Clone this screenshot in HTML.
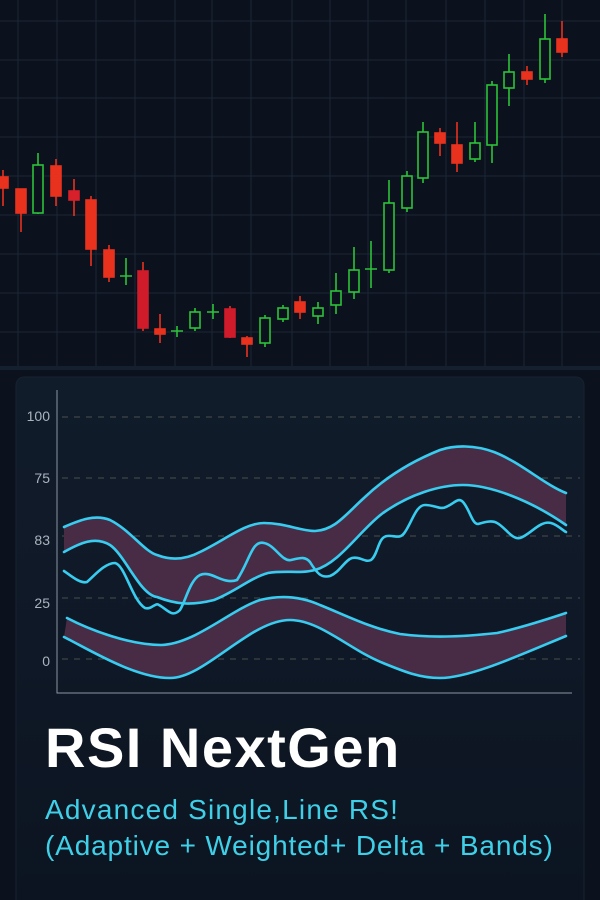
<!DOCTYPE html>
<html><head><meta charset="utf-8"><style>
html,body{margin:0;padding:0;background:#0b111d;width:600px;height:900px;overflow:hidden}
svg{position:absolute;left:0;top:0}
.t{position:absolute;left:45px;font-family:"Liberation Sans",sans-serif}
</style></head><body>
<svg width="600" height="900" viewBox="0 0 600 900">
<defs>
<linearGradient id="cg" x1="0" y1="0" x2="0" y2="1"><stop offset="0" stop-color="#111c2b"/><stop offset="1" stop-color="#0c1421"/></linearGradient>
</defs>
<rect width="600" height="370" fill="#0b111d"/>
<g stroke="#1c2638" stroke-width="1">
<path d="M0 21H600M0 60H600M0 98H600M0 137H600M0 176H600M0 215H600M0 254H600M0 293H600M0 332H600"/>
<path d="M18 0V368M57 0V368M96 0V368M135 0V368M175 0V368M212 0V368M251 0V368M292 0V368M330 0V368M368 0V368M406 0V368M446 0V368M485 0V368M524 0V368M562 0V368"/>
</g>
<rect x="0" y="366" width="600" height="4" fill="#15202f"/>
<g stroke-width="1.6">
<g stroke="#e8321e" fill="#e8321e">
<path d="M3 170V206"/><rect x="-2" y="177" width="10" height="11"/>
<path d="M21 189V232"/><rect x="16" y="189" width="10" height="24"/>
<path d="M56 159V206"/><rect x="51" y="166" width="10" height="30"/>
<path d="M74 179V216"/><rect x="69" y="191" width="10" height="9" fill="#d8202a" stroke="#d8202a"/>
<path d="M91 196V266"/><rect x="86" y="200" width="10" height="49"/>
<path d="M109 245V282"/><rect x="104" y="250" width="10" height="27"/>
<path d="M143 262V331"/><rect x="138" y="271" width="10" height="57" fill="#d01c2a" stroke="#d01c2a"/>
<path d="M160 314V343"/><rect x="155" y="329" width="10" height="5"/>
<path d="M230 306V338"/><rect x="225" y="309" width="10" height="28" fill="#d01c2a" stroke="#d01c2a"/>
<path d="M247 336V357"/><rect x="242" y="338" width="10" height="6"/>
<path d="M300 296V319"/><rect x="295" y="302" width="10" height="10"/>
<path d="M440 128V156"/><rect x="435" y="133" width="10" height="10"/>
<path d="M457 122V172"/><rect x="452" y="145" width="10" height="18"/>
<path d="M527 66V85"/><rect x="522" y="72" width="10" height="7"/>
<path d="M562 21V57"/><rect x="557" y="39" width="10" height="13"/>
</g>
<g stroke="#2cc23a" fill="none">
<path d="M38 153V214"/><rect x="33" y="165" width="10" height="48" fill="#0b111d"/>
<path d="M126 258V285M120 276H132"/>
<path d="M177 326V337M171 331H183"/>
<path d="M195 308V331"/><rect x="190" y="312" width="10" height="16" fill="#0b111d"/>
<path d="M213 304V319M207 312H219"/>
<path d="M265 315V347"/><rect x="260" y="318" width="10" height="25" fill="#0b111d"/>
<path d="M283 305V322"/><rect x="278" y="308" width="10" height="11" fill="#0b111d"/>
<path d="M318 302V324"/><rect x="313" y="308" width="10" height="8" fill="#0b111d"/>
<path d="M336 273V314"/><rect x="331" y="291" width="10" height="14" fill="#0b111d"/>
<path d="M354 247V299"/><rect x="349" y="270" width="10" height="22" fill="#0b111d"/>
<path d="M371 241V288M365 269H377"/>
<path d="M389 180V273"/><rect x="384" y="203" width="10" height="67" fill="#0b111d"/>
<path d="M407 171V212"/><rect x="402" y="176" width="10" height="32" fill="#0b111d"/>
<path d="M423 122V183"/><rect x="418" y="132" width="10" height="46" fill="#0b111d"/>
<path d="M475 122V162"/><rect x="470" y="143" width="10" height="16" fill="#0b111d"/>
<path d="M492 81V163"/><rect x="487" y="85" width="10" height="60" fill="#0b111d"/>
<path d="M509 54V106"/><rect x="504" y="72" width="10" height="16" fill="#0b111d"/>
<path d="M545 14V83"/><rect x="540" y="39" width="10" height="40" fill="#0b111d"/>
</g>
</g>
<rect x="16" y="377" width="568" height="540" rx="8" fill="url(#cg)" stroke="#17222f"/>
<g stroke="#4a4f4f" stroke-width="1" stroke-dasharray="6 6">
<path d="M62 417H580M62 478H580M62 536H580M62 598H580M62 659H580"/>
</g>
<path d="M57 390V693H572" stroke="#8a96a3" stroke-width="1" fill="none"/>
<g font-family="Liberation Sans,sans-serif" font-size="14" fill="#aab4bf" text-anchor="end">
<text x="50" y="421">100</text><text x="50" y="483">75</text><text x="50" y="545">83</text><text x="50" y="608">25</text><text x="50" y="666">0</text>
</g>
<g fill="#482c45">
<path d="M64 527C80 520 95 514 110 520C130 530 145 552 157 555C170 560 185 560 200 552C225 540 245 523 264 523C285 523 300 531 315 531C335 530 345 515 365 497C385 478 410 462 440 450C455 445 475 445 494 452C520 462 545 485 566 493L566 525C530 500 490 485 463 485C440 485 410 494 383 513C360 530 340 563 315 570C300 574 285 570 268 573C250 578 235 592 214 600C190 606 175 604 157 597C140 595 125 555 110 545C95 536 80 543 64 552Z"/>
<path d="M67 618C90 630 130 645 161 645C195 644 230 610 260 600C280 595 300 596 320 605C345 615 370 628 400 634C430 638 460 637 497 633C520 628 545 620 566 613L566 636C520 655 470 678 440 678C420 678 405 672 383 663C350 650 320 620 290 620C250 620 205 678 170 678C135 678 90 650 64 637Z"/>
</g>
<g fill="none" stroke="#38cdf0" stroke-width="2.6" stroke-linejoin="round" stroke-linecap="round">
<path d="M64 527C80 520 95 514 110 520C130 530 145 552 157 555C170 560 185 560 200 552C225 540 245 523 264 523C285 523 300 531 315 531C335 530 345 515 365 497C385 478 410 462 440 450C455 445 475 445 494 452C520 462 545 485 566 493"/>
<path d="M64 552C80 543 95 536 110 545C125 555 140 595 157 597C175 604 190 606 214 600C235 592 250 578 268 573C285 570 300 574 315 570C340 563 360 530 383 513C410 494 440 485 463 485C490 485 530 500 566 525"/>
<path d="M67 618C90 630 130 645 161 645C195 644 230 610 260 600C280 595 300 596 320 605C345 615 370 628 400 634C430 638 460 637 497 633C520 628 545 620 566 613"/>
<path d="M64 637C90 650 135 678 170 678C205 678 250 620 290 620C320 620 350 650 383 663C405 672 420 678 440 678C470 678 520 655 566 636"/>
<path d="M64 571C70 575 80 584 87 582C95 575 105 563 115 563C125 565 132 600 145 608C152 610 155 602 159 605C168 610 172 618 180 610C186 600 190 580 200 575C212 570 222 585 237 580C250 560 252 540 264 543C275 545 282 562 291 560C300 558 305 556 310 562C318 575 322 578 330 576C340 572 345 560 352 558C360 556 365 563 371 560C378 555 378 537 387 536C395 535 400 540 405 532C412 522 416 505 425 505C435 505 440 510 446 507C455 503 458 497 463 502C470 510 472 524 478 524C485 522 492 520 497 523C505 527 512 540 520 538C530 535 540 520 551 523C558 525 562 530 566 532"/>
</g>
</svg>
<div class="t" style="top:716px;font-size:56px;font-weight:bold;color:#fff;letter-spacing:1.5px;line-height:64px">RSI NextGen</div>
<div class="t" style="top:794px;font-size:28px;color:#3fd0e8;letter-spacing:1.2px;line-height:32px">Advanced Single,Line RS!</div>
<div class="t" style="top:830px;font-size:28px;color:#3fd0e8;letter-spacing:0.85px;line-height:32px">(Adaptive + Weighted+ Delta + Bands)</div>
</body></html>
